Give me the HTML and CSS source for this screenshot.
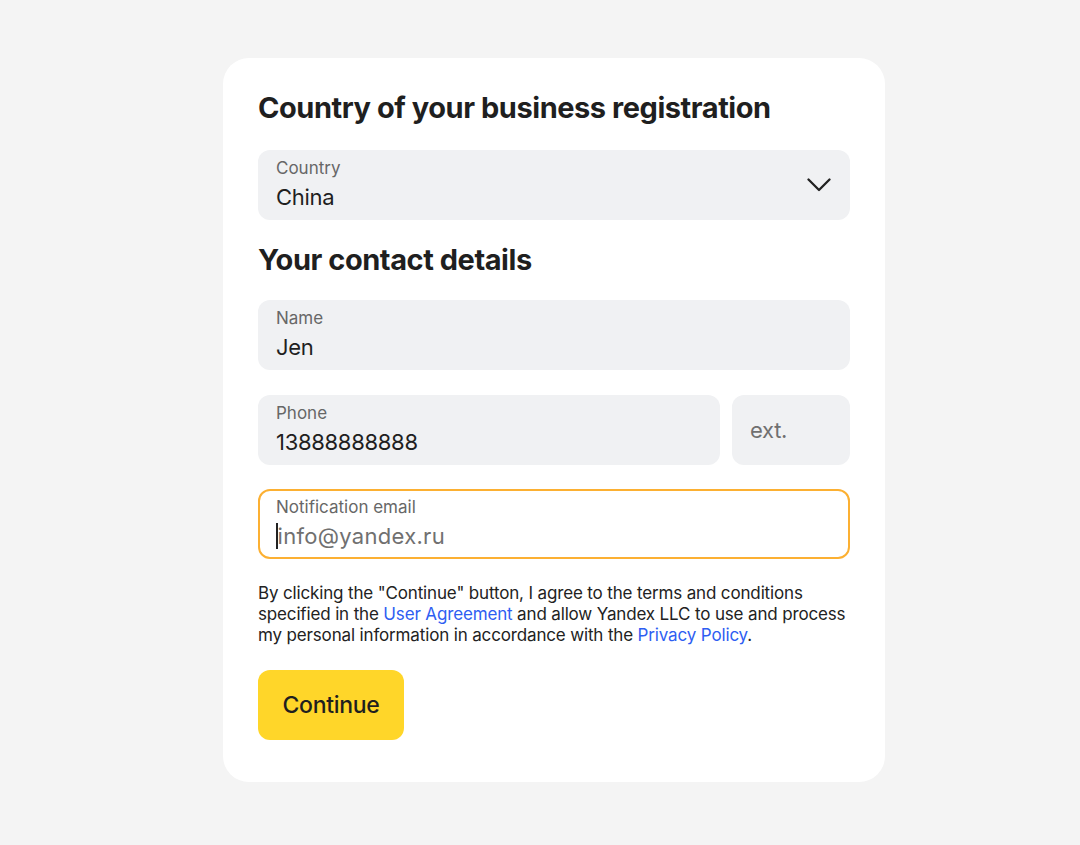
FILE: index.html
```html
<!DOCTYPE html>
<html lang="en">
<head>
<meta charset="utf-8">
<title>Country of your business registration</title>
<link rel="stylesheet" href="styles.css">
</head>
<body>
<main class="page">
  <form class="card">
    <h2 class="title">Country of your business registration</h2>
    <div class="field field-select">
      <div class="field-body">
        <span class="label">Country</span>
        <span class="value">China</span>
      </div>
      <svg class="chevron" width="24" height="14" viewBox="0 0 24 14" aria-hidden="true">
        <path d="M1.5 1.5 L12 12 L22.5 1.5" fill="none" stroke="#222" stroke-width="2.3" stroke-linecap="round" stroke-linejoin="round"/>
      </svg>
    </div>

    <h2 class="title title-second">Your contact details</h2>
    <div class="field">
      <div class="field-body">
        <span class="label">Name</span>
        <span class="value">Jen</span>
      </div>
    </div>

    <div class="row">
      <div class="field field-phone">
        <div class="field-body">
          <span class="label">Phone</span>
          <span class="value">13888888888</span>
        </div>
      </div>
      <div class="field field-ext">
        <span class="placeholder">ext.</span>
      </div>
    </div>

    <div class="field field-focus">
      <div class="field-body">
        <span class="label">Notification email</span>
        <span class="value"><span class="caret"></span><span class="placeholder placeholder-email">info@yandex.ru</span></span>
      </div>
    </div>

    <p class="legal">By clicking the "Continue" button, I agree to the terms and conditions specified in the <a href="#">User Agreement</a> and allow Yandex LLC to use and process my personal information in accordance with the <a href="#">Privacy Policy</a>.</p>

    <button type="button" class="btn">Continue</button>
  </form>
</main>
</body>
</html>
```

FILE: styles.css
```css
* { box-sizing: border-box; }
html, body { margin: 0; padding: 0; }
body {
  background: #f4f4f4;
  font-family: Inter, "Liberation Sans", sans-serif;
  color: #222;
}
.page {
  display: flex;
  justify-content: center;
  padding-top: 58px;
  padding-left: 28px;
}
.card {
  width: 662px;
  background: #fff;
  border-radius: 26px;
  padding: 34px 35px 42px;
  display: flex;
  flex-direction: column;
  align-items: stretch;
}
.title {
  margin: 0;
  font-size: 29px;
  line-height: 32px;
  font-weight: 700;
  color: #1f1f1f;
  letter-spacing: -0.45px;
}
.title-second { margin-top: 24px; }
.field {
  height: 70px;
  background: #f0f1f3;
  border-radius: 12px;
  display: flex;
  align-items: center;
  padding: 0 18px;
  margin-top: 26px;
}
.title-second + .field { margin-top: 24px; }
.field-body {
  flex: 1;
  display: flex;
  flex-direction: column;
}
.label {
  font-size: 17px;
  line-height: 20px;
  color: #676767;
}
.value {
  margin-top: 4px;
  font-size: 22px;
  line-height: 30px;
  color: #1f1f1f;
  display: flex;
  align-items: center;
  letter-spacing: -0.3px;
}
.chevron { flex: none; margin-right: 1px; }
.row {
  display: flex;
  gap: 12px;
  margin-top: 25px;
}
.row .field { margin-top: 0; }
.field-phone { flex: 1; }
.field-ext { width: 118px; flex: none; }
.placeholder {
  font-size: 22px;
  line-height: 30px;
  color: #707070;
  letter-spacing: -0.3px;
}
.placeholder-email { letter-spacing: 0.3px; }
.field-focus {
  margin-top: 24px;
  background: #fff;
  border: 2px solid #fcb032;
  padding: 0 16px;
}
.caret {
  display: inline-block;
  width: 1.5px;
  height: 26px;
  background: #222;
}
.legal {
  margin: 24px 0 0;
  font-size: 17px;
  line-height: 21px;
  color: #222;
  letter-spacing: -0.15px;
}
.legal a {
  color: #2e5ef2;
  text-decoration: none;
}
.btn {
  align-self: flex-start;
  margin-top: 24px;
  width: 146px;
  height: 70px;
  border: 0;
  border-radius: 12px;
  background: #ffd629;
  font-family: Inter, "Liberation Sans", sans-serif;
  font-size: 23px;
  font-weight: 500;
  color: #1f1f1f;
  letter-spacing: -0.3px;
  cursor: pointer;
}
```
